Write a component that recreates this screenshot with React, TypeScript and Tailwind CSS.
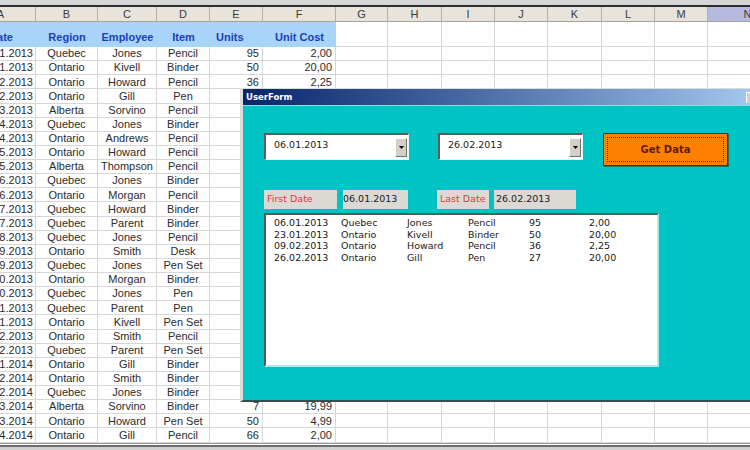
import React from "react"

const colGrid =
  "grid grid-cols-[70px_62px_59px_53px_53px_73px_52px_54px_53px_53px_54px_53px_53px_80px] ml-[-34px] w-[822px]"

const letters = ["A", "B", "C", "D", "E", "F", "G", "H", "I", "J", "K", "L", "M", "N"]

const sheet: string[][] = [
  ["06.01.2013", "Quebec", "Jones", "Pencil", "95", "2,00"],
  ["23.01.2013", "Ontario", "Kivell", "Binder", "50", "20,00"],
  ["09.02.2013", "Ontario", "Howard", "Pencil", "36", "2,25"],
  ["26.02.2013", "Ontario", "Gill", "Pen", "27", "20,00"],
  ["15.03.2013", "Alberta", "Sorvino", "Pencil", "56", "2,99"],
  ["01.04.2013", "Quebec", "Jones", "Binder", "60", "4,99"],
  ["18.04.2013", "Ontario", "Andrews", "Pencil", "75", "1,99"],
  ["05.05.2013", "Ontario", "Howard", "Pencil", "90", "4,99"],
  ["22.05.2013", "Alberta", "Thompson", "Pencil", "32", "1,99"],
  ["08.06.2013", "Quebec", "Jones", "Binder", "60", "8,99"],
  ["25.06.2013", "Ontario", "Morgan", "Pencil", "90", "4,99"],
  ["12.07.2013", "Quebec", "Howard", "Binder", "29", "1,99"],
  ["29.07.2013", "Quebec", "Parent", "Binder", "81", "19,99"],
  ["15.08.2013", "Quebec", "Jones", "Pencil", "35", "4,99"],
  ["01.09.2013", "Ontario", "Smith", "Desk", "2", "125,00"],
  ["18.09.2013", "Quebec", "Jones", "Pen Set", "16", "15,99"],
  ["05.10.2013", "Ontario", "Morgan", "Binder", "28", "8,99"],
  ["22.10.2013", "Quebec", "Jones", "Pen", "64", "8,99"],
  ["08.11.2013", "Quebec", "Parent", "Pen", "15", "19,99"],
  ["25.11.2013", "Ontario", "Kivell", "Pen Set", "96", "4,99"],
  ["12.12.2013", "Ontario", "Smith", "Pencil", "67", "1,29"],
  ["29.12.2013", "Quebec", "Parent", "Pen Set", "74", "15,99"],
  ["15.01.2014", "Ontario", "Gill", "Binder", "46", "8,99"],
  ["01.02.2014", "Ontario", "Smith", "Binder", "87", "15,00"],
  ["18.02.2014", "Quebec", "Jones", "Binder", "4", "4,99"],
  ["07.03.2014", "Alberta", "Sorvino", "Binder", "7", "19,99"],
  ["24.03.2014", "Ontario", "Howard", "Pen Set", "50", "4,99"],
  ["10.04.2014", "Ontario", "Gill", "Pencil", "66", "2,00"],
]

const found = sheet.slice(0, 4)

const cell = "h-[14.14px] border-r border-b border-[#d6d6d6] flex items-center overflow-hidden whitespace-nowrap"

function Combo({ value }: { value: string }) {
  return (
    <div className="flex w-[145px] h-[27px] bg-white border-t-2 border-l-2 border-b border-r border-t-[#5e5e5e] border-l-[#5e5e5e] border-b-[#dff7f7] border-r-[#dff7f7]">
      <div className="flex-1 pl-[8px] pt-[3px] text-[9.5px] text-[#1a1a1a]">{value}</div>
      <div className="mt-[3px] mr-[1px] w-[12px] h-[19px] bg-[#d4d0c8] border-t border-l border-white border-r border-b border-r-[#707070] border-b-[#707070] flex items-center justify-center">
        <svg width="5" height="3" viewBox="0 0 5 3">
          <path d="M0 0h5L2.5 3z" fill="#000" />
        </svg>
      </div>
    </div>
  )
}

export default function App() {
  return (
    <div className="relative w-[750px] h-[450px] overflow-hidden bg-white font-['Liberation_Sans',Arial,sans-serif] text-[11px] text-[#2b2b2b]">
      {/* toolbar edge */}
      <div className="h-[5px] bg-[#d6d6d6]" />
      <div className="h-[2px] bg-[#2e2e2e]" />

      {/* column letters */}
      <div className={colGrid}>
        {letters.map((l) => (
          <div
            key={l}
            className={`h-[15px] border-r border-b border-r-[#b4b0a8] border-b-[#a6a29a] flex items-center justify-center text-[#3a3a3a] ${
              l === "N" ? "bg-[#b6badf]" : "bg-[#e8e4dc]"
            }`}
          >
            {l}
          </div>
        ))}
      </div>

      {/* table headings */}
      <div className={colGrid}>
        {["Date", "Region", "Employee", "Item", "Units", "Unit Cost"].map((h) => (
          <div
            key={h}
            className={`h-[25px] bg-[#a8d4fa] border-b border-[#a8d4fa] flex items-end pb-[1px] font-bold text-[#1e3cb8] ${
              h === "Units" ? "justify-start pl-[6px]" : "justify-center"
            }`}
          >
            {h}
          </div>
        ))}
        {letters.slice(6).map((l) => (
          <div key={l} className="h-[25px] border-r border-b border-[#d6d6d6]" />
        ))}
      </div>

      {/* data rows */}
      {sheet.map((r, i) => (
        <div key={i} className={colGrid}>
          <div className={`${cell} justify-end pr-[2px]`}>{r[0]}</div>
          <div className={`${cell} justify-center`}>{r[1]}</div>
          <div className={`${cell} justify-center`}>{r[2]}</div>
          <div className={`${cell} justify-center`}>{r[3]}</div>
          <div className={`${cell} justify-end pr-[3px]`}>{r[4]}</div>
          <div className={`${cell} justify-end pr-[3px]`}>{r[5]}</div>
          {letters.slice(6).map((l) => (
            <div key={l} className={cell} />
          ))}
        </div>
      ))}

      {/* bottom edge */}
      <div className="h-[1px] bg-[#9a9a9a]" />
      <div className="h-[1px] bg-white" />
      <div className="h-[2px] bg-[#6e6e6e]" />
      <div className="h-[6px] bg-[#d0d0d0]" />

      {/* UserForm window */}
      <div className="absolute left-[240px] top-[88px] w-[522px] h-[314px] flex flex-col border-l-[3px] border-t border-b-2 border-l-[#dcdcdc] border-t-[#dcdcdc] border-b-[#3c4c4c] font-['DejaVu_Sans',Tahoma,sans-serif]">
        <div className="h-[16px] flex items-center justify-between pl-[3px] pr-[2px] bg-linear-to-r from-[#0a246a] to-[#a6caf0]">
          <span className="text-[8.5px] font-bold text-white">UserForm</span>
          <div className="w-[14px] h-[11px] bg-[#d4d0c8] border-t border-l border-white" />
        </div>
        <div className="flex-1 bg-[#00c4c4] border-t border-[#7fe4e4] pl-[21px] pt-[27px]">
          <div className="flex items-start">
            <Combo value="06.01.2013" />
            <div className="ml-[29px]">
              <Combo value="26.02.2013" />
            </div>
            <button className="ml-[20px] w-[125px] h-[33px] bg-[#ff8000] border border-[#3a3a3a] shadow-[1px_1px_0_#1f6f6f] p-[3px]">
              <div className="w-full h-full border border-dotted border-[#6a2a00] flex items-center justify-center text-[10px] font-bold text-[#5e1c00]">
                Get Data
              </div>
            </button>
          </div>

          <div className="flex mt-[24px] text-[9.5px] h-[19px]">
            <div className="w-[73px] bg-[#dcd8d4] text-[#e03a3a] pl-[3px] pt-[2px]">First Date</div>
            <div className="ml-[6px] w-[65px] bg-[#dcd8d4] text-[#1a1a1a] pt-[2px]">06.01.2013</div>
            <div className="ml-[29px] w-[52px] bg-[#dcd8d4] text-[#e03a3a] pl-[3px] pt-[2px]">Last Date</div>
            <div className="ml-[5px] w-[82px] bg-[#dcd8d4] text-[#1a1a1a] pl-[2px] pt-[2px]">26.02.2013</div>
          </div>

          <div className="mt-[4px] w-[395px] h-[154px] bg-white border-t-2 border-l-2 border-b-2 border-r-2 border-t-[#585858] border-l-[#585858] border-b-[#a6ecec] border-r-[#a6ecec] pl-[8px] pt-[2px] text-[9.5px] leading-[11.7px] text-[#1a1a1a]">
            {found.map((r, i) => (
              <div key={i} className="grid grid-cols-[67px_66px_61px_61px_60px_auto]">
                {r.map((v, j) => (
                  <span key={j}>{v}</span>
                ))}
              </div>
            ))}
          </div>
        </div>
      </div>
    </div>
  )
}
